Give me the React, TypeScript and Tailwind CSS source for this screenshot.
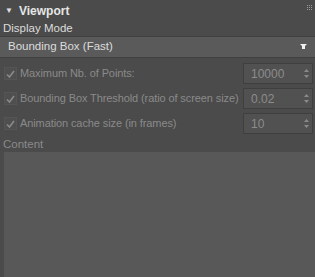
const rows = [
  { label: "Maximum Nb. of Points:", value: "10000" },
  { label: "Bounding Box Threshold (ratio of screen size)", value: "0.02" },
  { label: "Animation cache size (in frames)", value: "10" },
];

function Check() {
  return (
    <span className="flex h-[13px] w-[13px] shrink-0 items-center justify-center border border-[#555] bg-[#4f4f4f]">
      <svg width="9" height="8" viewBox="0 0 9 8">
        <path d="M1 4.5 L3.5 7 L8 1" fill="none" stroke="#8a8a8a" strokeWidth="1.6" />
      </svg>
    </span>
  );
}

function Spinner({ value }: { value: string }) {
  return (
    <div className="flex h-[21px] w-[70px] items-center justify-between border border-[#3f3f3f] bg-[#515151] pl-[7px] pr-[3px] text-[12px] text-[#8c8c8c]">
      <span>{value}</span>
      <svg width="5" height="9" viewBox="0 0 5 9">
        <path d="M2.5 0 L5 3 L0 3 Z M0 6 L5 6 L2.5 9 Z" fill="#8a8a8a" />
      </svg>
    </div>
  );
}

export default function App() {
  return (
    <div
      className="flex h-[277px] w-[315px] flex-col bg-[#4b4b4b] text-[11.5px] text-[#dcdcdc]"
      style={{ fontFamily: '"Liberation Sans", sans-serif' }}
    >
      <div className="flex h-[21px] items-center justify-between pl-[5px] pr-[3px]">
        <div className="flex items-center gap-[6px]">
          <span className="text-[8px] text-[#e0e0e0]">▼</span>
          <span className="text-[12px] font-bold text-[#e6e6e6]">Viewport</span>
        </div>
        <div className="grid grid-cols-3 gap-[1px] self-start pt-[5px]">
          {Array.from({ length: 9 }).map((_, i) => (
            <span key={i} className="h-[1px] w-[1px] bg-[#9a9a9a]" />
          ))}
        </div>
      </div>
      <div className="h-[15px] pl-[3px] leading-[15px]">Display Mode</div>
      <div className="flex h-[22px] items-center justify-between border-y border-[#404040] bg-[#5a5a5a] pl-[8px] pr-[8px]">
        <span>Bounding Box (Fast)</span>
        <svg width="7" height="6" viewBox="0 0 7 6">
          <path d="M0 0 L7 0 L5 2 L5 5 L2 5 L2 2 Z" fill="#f0f0f0" />
        </svg>
      </div>
      <div className="flex flex-col gap-[4px] pt-[5px] text-[#8a8a8a]">
        {rows.map((r) => (
          <div key={r.label} className="grid h-[21px] grid-cols-[1fr_70px] items-center gap-[2px] pl-[4px] pr-[2px]">
            <div className="flex min-w-0 items-center gap-[3px] whitespace-nowrap text-[11px] tracking-[-0.1px]">
              <Check />
              <span>{r.label}</span>
            </div>
            <Spinner value={r.value} />
          </div>
        ))}
      </div>
      <div className="h-[18px] pl-[3px] pt-[2px] leading-[16px] text-[#8a8a8a]">Content</div>
      <div className="ml-[4px] flex-1 bg-[#585858]" />
    </div>
  );
}
